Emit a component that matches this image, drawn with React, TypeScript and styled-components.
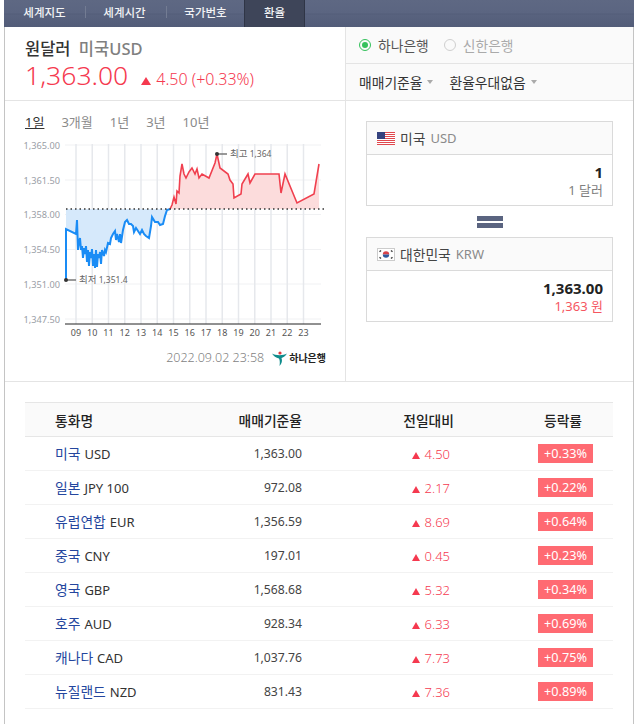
import styled, { createGlobalStyle } from 'styled-components';

const GlobalStyle = createGlobalStyle`
  html, body {
    margin: 0;
    background: #fff;
    font-family: "Noto Sans", "Noto Sans CJK KR", sans-serif;
    color: #333;
  }
`;

const Frame = styled.div`
  width: 630px;
  height: 724px;
  margin-left: 4px;
  overflow: hidden;
`;

const TabBar = styled.nav`
  display: flex;
  align-items: stretch;
  height: 27px;
  background: linear-gradient(#5e6883 0, #5b6581 13px, #535d79 14px, #58627e 15px, #525c78 27px);
`;

const Tab = styled.div<{ $width: number; $pad?: number; $active?: boolean }>`
  width: ${(p) => p.$width}px;
  box-sizing: border-box;
  padding: 0 ${(p) => p.$pad ?? 0}px 3px 0;
  display: flex;
  align-items: center;
  justify-content: center;
  font-size: 11.5px;
  font-weight: 500;
  color: #f2f3f5;
  background: ${(p) => (p.$active ? '#3e4559' : 'transparent')};
  border-left: ${(p) => (p.$active ? '1px solid #2f3546' : '0')};
  border-right: ${(p) => (p.$active ? '1px solid #2f3546' : '0')};
`;

const TabDivider = styled.i`
  width: 1px;
  height: 12px;
  align-self: center;
  margin-bottom: 3px;
  background: #737c93;
`;

const Body = styled.div`
  border-left: 1px solid #c4c4c4;
  border-right: 1px solid #c4c4c4;
  height: 697px;
`;

const TopRow = styled.section`
  display: flex;
  height: 354px;
  border-bottom: 1px solid #e4e4e4;
`;

const LeftPanel = styled.div`
  width: 340px;
  border-right: 1px solid #e4e4e4;
`;

const QuoteHeader = styled.header`
  height: 74px;
  padding: 12px 0 0 20px;
  box-sizing: border-box;
  border-bottom: 1px solid #e4e4e4;
`;

const QuoteTitle = styled.h1`
  margin: 0;
  font-size: 16.5px;
  line-height: 20px;
  font-weight: 500;
  color: #333;
  span {
    color: #808080;
    margin-left: 4px;
  }
`;

const PriceLine = styled.div`
  display: flex;
  align-items: baseline;
  color: #f5394f;
  line-height: 32px;
`;

const Price = styled.strong`
  font-size: 26.5px;
  font-weight: 300;
  margin-right: 13px;
`;

const Change = styled.span`
  font-size: 16px;
  font-weight: 300;
`;

const Up = styled.i<{ $small?: boolean }>`
  display: inline-block;
  width: 0;
  height: 0;
  border-left: ${(p) => (p.$small ? 4 : 5)}px solid transparent;
  border-right: ${(p) => (p.$small ? 4 : 5)}px solid transparent;
  border-bottom: ${(p) => (p.$small ? 7 : 8)}px solid #f5394f;
  margin-right: 5px;
`;

const Periods = styled.div`
  display: flex;
  gap: 17px;
  height: 34px;
  padding: 12px 0 0 20px;
  box-sizing: border-box;
  font-size: 13px;
  line-height: 19px;
`;

const Period = styled.span<{ $on?: boolean }>`
  color: ${(p) => (p.$on ? '#333' : '#8a8a8a')};
  text-decoration: ${(p) => (p.$on ? 'underline' : 'none')};
`;

const ChartSvg = styled.svg`
  display: block;
`;

const ChartFooter = styled.div`
  display: flex;
  align-items: center;
  justify-content: flex-end;
  gap: 8px;
  padding: 7px 19px 0 0;
  font-size: 12.5px;
  font-weight: 300;
  line-height: 22px;
  color: #7f7f7f;
`;

const LogoMark = styled.span`
  display: flex;
  align-items: center;
  gap: 2px;
  font-size: 10px;
  font-weight: 700;
  color: #222;
`;

const RightPanel = styled.aside`
  flex: 1;
`;

const OptionRow = styled.div`
  display: flex;
  align-items: center;
  height: 36px;
  padding-left: 13px;
  background: #fafafa;
  border-bottom: 1px solid #e4e4e4;
  font-size: 13.8px;
`;

const RadioDot = styled.i<{ $on?: boolean }>`
  width: 12px;
  height: 12px;
  box-sizing: border-box;
  border-radius: 50%;
  border: 1px solid ${(p) => (p.$on ? '#35c15c' : '#cfcfcf')};
  margin-right: 7px;
  display: flex;
  align-items: center;
  justify-content: center;
  &::after {
    content: '';
    width: 6px;
    height: 6px;
    border-radius: 50%;
    background: ${(p) => (p.$on ? '#35c15c' : 'transparent')};
  }
`;

const RadioLabel = styled.span<{ $on?: boolean }>`
  color: ${(p) => (p.$on ? '#555' : '#aaa')};
  margin-right: 15px;
`;

const Dropdown = styled.span`
  display: flex;
  align-items: center;
  color: #333;
  margin-right: 16px;
  &::after {
    content: '';
    margin-left: 5px;
    border-left: 3.5px solid transparent;
    border-right: 3.5px solid transparent;
    border-top: 4px solid #aaa;
  }
`;

const Converter = styled.div`
  padding: 20px 20px 0;
`;

const Card = styled.div`
  height: 85px;
  box-sizing: border-box;
  border: 1px solid #dadada;
`;

const CardHead = styled.div`
  display: flex;
  align-items: center;
  gap: 5px;
  height: 32px;
  padding-left: 10px;
  background: #fafafa;
  border-bottom: 1px solid #dadada;
  font-size: 13.8px;
  color: #444;
  span {
    font-size: 13px;
    color: #8a8a8a;
  }
`;

const CardBody = styled.div`
  height: 51px;
  padding: 8px 9px 0 0;
  box-sizing: border-box;
  text-align: right;
`;

const Amount = styled.div`
  font-size: 15px;
  line-height: 18px;
  font-weight: 700;
  color: #222;
`;

const AmountNote = styled.div<{ $red?: boolean }>`
  font-size: 13px;
  line-height: 19px;
  color: ${(p) => (p.$red ? '#f5565f' : '#808080')};
`;

const EqualSign = styled.div`
  height: 31px;
  display: flex;
  flex-direction: column;
  align-items: center;
  justify-content: center;
  gap: 2px;
  &::before,
  &::after {
    content: '';
    width: 26px;
    height: 5px;
    background: #5a6480;
  }
`;

const RateTable = styled.div`
  margin: 20px 20px 0 20px;
`;

const grid = `
  display: grid;
  grid-template-columns: 148px 99px 148px 88px 55px;
  align-items: center;
  padding-left: 30px;
  box-sizing: border-box;
`;

const HeadRow = styled.div`
  ${grid}
  height: 35px;
  background: #fafafa;
  border-top: 1px solid #e6e6e6;
  border-bottom: 1px solid #e6e6e6;
  font-size: 13.8px;
  font-weight: 500;
  color: #222;
`;

const HeadCell = styled.div<{ $col: number }>`
  text-align: ${(p) => (p.$col === 0 ? 'left' : p.$col === 4 ? 'center' : 'right')};
  margin-right: ${(p) => (p.$col === 2 ? '-4px' : p.$col === 4 ? '5px' : '0')};
  grid-column: ${(p) => (p.$col === 4 ? 5 : p.$col + 1)};
  white-space: nowrap;
`;

const Row = styled.div`
  ${grid}
  height: 34px;
  border-bottom: 1px solid #f2f2f2;
  font-size: 13px;
`;

const Name = styled.div`
  color: #333;
  padding-bottom: 2px;
  b {
    font-size: 13.8px;
    font-weight: 400;
    color: #24469e;
    margin-right: 4px;
  }
`;

const Rate = styled.div`
  text-align: right;
  color: #444;
  font-size: 12.2px;
`;

const Diff = styled.div`
  text-align: right;
  color: #f5394f;
  font-size: 13px;
  font-weight: 300;
`;

const Badge = styled.div`
  grid-column: 5;
  height: 19px;
  line-height: 19px;
  text-align: center;
  background: #ff6a72;
  color: #fff;
  font-size: 12.7px;
`;

const rows = [
  ['미국', 'USD', '1,363.00', '4.50', '+0.33%'],
  ['일본', 'JPY 100', '972.08', '2.17', '+0.22%'],
  ['유럽연합', 'EUR', '1,356.59', '8.69', '+0.64%'],
  ['중국', 'CNY', '197.01', '0.45', '+0.23%'],
  ['영국', 'GBP', '1,568.68', '5.32', '+0.34%'],
  ['호주', 'AUD', '928.34', '6.33', '+0.69%'],
  ['캐나다', 'CAD', '1,037.76', '7.73', '+0.75%'],
  ['뉴질랜드', 'NZD', '831.43', '7.36', '+0.89%'],
];

const blue =
  '66,280 66,229 76,234 77,220 78,250 79,242 80,238 81,250 82,246 83,258 84,248 85,254 86,246 87,262 88,250 89,266 90,252 91,258 92,249 93,266 94,254 95,268 96,250 97,267 98,254 99,258 100,252 101,264 102,250 104,256 105,250 106,252 108,243 110,244 111,238 113,234 115,231 116,240 117,234 119,242 120,234 121,243 123,230 125,222 127,220 129,224 131,224 133,226 134,232 136,228 138,231 140,234 142,230 144,234 146,236 149,238 151,226 152,217 155,222 158,222 160,225 163,224 165,216 167,210 170,209';
const red =
  '170,209 172,205 174,197 176,204 177,191 179,193 180,176 182,164 184,174 186,178 189,172 192,168 195,174 197,169 199,178 202,174 209,178 215,163 217,154 220,168 228,174 230,180 233,184 234,198 241,194 242,184 248,174 250,183 255,174 279,174 281,193 285,174 297,203 314,194 319,164';

const yLabels: [string, number][] = [
  ['1,365.00', 145],
  ['1,361.50', 180],
  ['1,358.00', 214.5],
  ['1,354.50', 249.5],
  ['1,351.00', 284],
  ['1,347.50', 319],
];
const hours = ['09', '10', '11', '12', '13', '14', '15', '16', '17', '18', '19', '20', '21', '22', '23'];

const Chart = () => (
  <ChartSvg width={340} height={205} viewBox="5 135 340 205" fontFamily='"Noto Sans", "Noto Sans CJK KR", sans-serif'>
    {yLabels.map(([label, y]) => (
      <g key={label}>
        <line x1={65} x2={321} y1={y} y2={y} stroke="#f0f1f3" />
        <text x={60} y={y + 3.5} textAnchor="end" fontSize={9.2} fill="#9a9ea6">
          {label}
        </text>
      </g>
    ))}
    {hours.map((h, i) => (
      <g key={h}>
        <line x1={76 + i * 16.25} x2={76 + i * 16.25} y1={144} y2={324} stroke="#e6e8ec" strokeWidth={1.5} />
        <text x={76 + i * 16.25} y={336} textAnchor="middle" fontSize={9} fill="#555">
          {h}
        </text>
      </g>
    ))}
    <polygon points={`66,209 ${blue} 170,209`} fill="#d6e9fb" />
    <polygon points={`${red} 319,209 170,209`} fill="#fcdcdc" />
    <polyline points={blue} fill="none" stroke="#1a8cf5" strokeWidth={2} />
    <polyline points={red} fill="none" stroke="#f0404f" strokeWidth={1.6} />
    <line x1={66} x2={324} y1={209} y2={209} stroke="#333" strokeWidth={1.5} strokeDasharray="1.5 3" />
    <line x1={65} x2={321} y1={324} y2={324} stroke="#222" strokeWidth={1} />
    <line x1={217} x2={227} y1={154} y2={154} stroke="#777" strokeWidth={1.5} />
    <circle cx={217} cy={154} r={2} fill="#333" />
    <text x={230} y={157} fill="#666">
      <tspan fontSize={9.5}>최고</tspan>
      <tspan fontSize={8.5}> 1,364</tspan>
    </text>
    <line x1={66} x2={76} y1={280} y2={280} stroke="#777" strokeWidth={1.5} />
    <circle cx={66} cy={280} r={2} fill="#333" />
    <text x={79} y={283} fill="#666">
      <tspan fontSize={9.5}>최저</tspan>
      <tspan fontSize={8.5}> 1,351.4</tspan>
    </text>
  </ChartSvg>
);

const UsFlag = () => (
  <svg width={18} height={13} viewBox="0 0 18 13">
    <rect width={18} height={13} fill="#fff" />
    {[0, 2, 4, 6, 8, 10, 12].map((y) => (
      <rect key={y} y={y} width={18} height={1} fill="#e0484e" />
    ))}
    <rect width={8} height={7} fill="#34427e" />
  </svg>
);

const KrFlag = () => (
  <svg width={18} height={13} viewBox="0 0 18 13">
    <rect x={0.5} y={0.5} width={17} height={12} fill="#fff" stroke="#ccc" />
    <path d="M5.8 6.5a3.2 3.2 0 0 1 6.4 0z" fill="#d8434a" />
    <path d="M5.8 6.5a3.2 3.2 0 0 0 6.4 0z" fill="#2f5a9e" />
    <path d="M2.500 3.800l1.500-1.400M14 2.400l1.500 1.400M2.500 9.200l1.500 1.400M14 10.600l1.500-1.400" stroke="#444" strokeWidth={1.4} />
  </svg>
);

const HanaMark = () => (
  <svg width={15} height={15} viewBox="0 0 15 15">
    <circle cx={8} cy={2} r={1.6} fill="#e0393e" />
    <path d="M0 2.500c3 2 11 2.500 15 0-2 3-4 4-5.500 4.500 1 2.500.5 5.500-2 8 .5-3 .5-5.500-.5-7.500C4 7 1.500 5 0 2.500z" fill="#0f8c8c" />
  </svg>
);

const App = () => (
  <Frame>
    <GlobalStyle />
    <TabBar>
      <Tab $width={81}>세계지도</Tab>
      <TabDivider />
      <Tab $width={80} $pad={3}>
        세계시간
      </Tab>
      <TabDivider />
      <Tab $width={77}>국가번호</Tab>
      <Tab $width={61} $active>
        환율
      </Tab>
    </TabBar>
    <Body>
      <TopRow>
        <LeftPanel>
          <QuoteHeader>
            <QuoteTitle>
              원달러 <span>미국USD</span>
            </QuoteTitle>
            <PriceLine>
              <Price>1,363.00</Price>
              <Change>
                <Up />4.50 (+0.33%)
              </Change>
            </PriceLine>
          </QuoteHeader>
          <Periods>
            <Period $on>1일</Period>
            <Period>3개월</Period>
            <Period>1년</Period>
            <Period>3년</Period>
            <Period>10년</Period>
          </Periods>
          <Chart />
          <ChartFooter>
            2022.09.02 23:58
            <LogoMark>
              <HanaMark />
              하나은행
            </LogoMark>
          </ChartFooter>
        </LeftPanel>
        <RightPanel>
          <OptionRow>
            <RadioDot $on />
            <RadioLabel $on>하나은행</RadioLabel>
            <RadioDot />
            <RadioLabel>신한은행</RadioLabel>
          </OptionRow>
          <OptionRow>
            <Dropdown>매매기준율</Dropdown>
            <Dropdown>환율우대없음</Dropdown>
          </OptionRow>
          <Converter>
            <Card>
              <CardHead>
                <UsFlag />
                미국 <span>USD</span>
              </CardHead>
              <CardBody>
                <Amount>1</Amount>
                <AmountNote>1 달러</AmountNote>
              </CardBody>
            </Card>
            <EqualSign />
            <Card>
              <CardHead>
                <KrFlag />
                대한민국 <span>KRW</span>
              </CardHead>
              <CardBody>
                <Amount>1,363.00</Amount>
                <AmountNote $red>1,363 원</AmountNote>
              </CardBody>
            </Card>
          </Converter>
        </RightPanel>
      </TopRow>
      <RateTable>
        <HeadRow>
          <HeadCell $col={0}>통화명</HeadCell>
          <HeadCell $col={1}>매매기준율</HeadCell>
          <HeadCell $col={2}>전일대비</HeadCell>
          <HeadCell $col={4}>등락률</HeadCell>
        </HeadRow>
        {rows.map(([country, code, rate, diff, pct]) => (
          <Row key={code}>
            <Name>
              <b>{country}</b>
              {code}
            </Name>
            <Rate>{rate}</Rate>
            <Diff>
              <Up $small />
              {diff}
            </Diff>
            <Badge>{pct}</Badge>
          </Row>
        ))}
      </RateTable>
    </Body>
  </Frame>
);

export default App;
